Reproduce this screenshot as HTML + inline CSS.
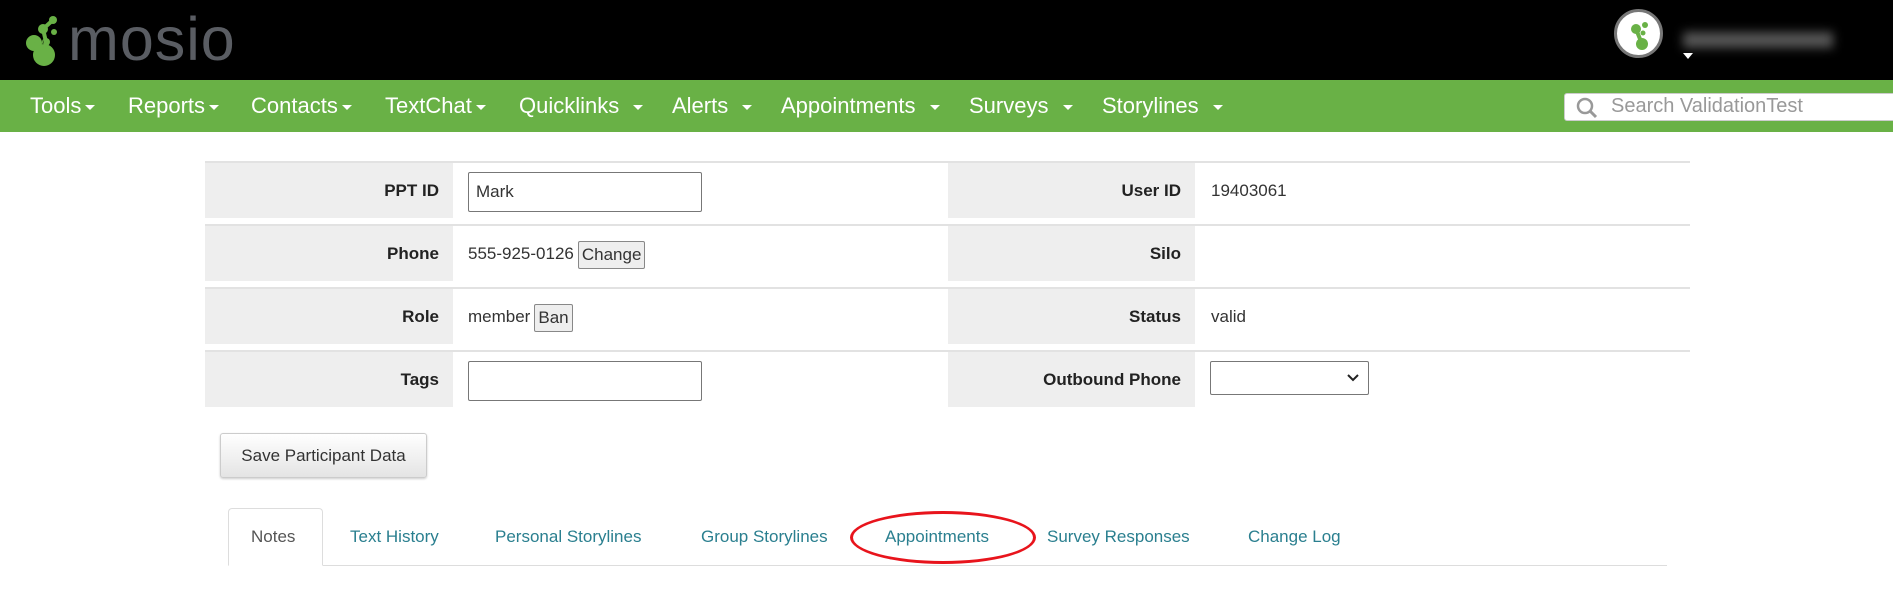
<!DOCTYPE html>
<html><head><meta charset="utf-8"><style>
*{box-sizing:border-box}
body{margin:0;width:1893px;height:591px;overflow:hidden;background:#fff;font-family:"Liberation Sans",Arial,sans-serif;position:relative}
.abs{position:absolute}
.top{left:0;top:0;width:1893px;height:80px;background:#000}
.nav{left:0;top:80px;width:1893px;height:52px;background:#69b146}
.nav span{position:absolute;top:13px;color:#fff;font-size:22px;white-space:nowrap}
.car{display:inline-block;width:0;height:0;border-left:5px solid transparent;border-right:5px solid transparent;border-top:5px solid #fff;vertical-align:middle;margin-left:4px}
.row{position:absolute;left:205px;width:1485px;height:57px;border-top:2px solid #e2e2e2}
.lab{position:absolute;top:0;height:55px;background:#eee;font-weight:bold;font-size:17px;color:#222;text-align:right;line-height:55px;padding-right:14px}
.val{position:absolute;top:0;height:55px;font-size:17px;color:#333;line-height:55px}
.inp{position:absolute;border:1px solid #777;border-radius:2px;background:#fff}
.btn{display:inline-block;border:1px solid #888;background:#eee;padding:0 3px;line-height:26px;border-radius:2px;margin-left:4px;vertical-align:middle}
.tab{position:absolute;top:527px;font-size:17px;color:#2a7f8f}
</style></head><body>
<div class="abs top"></div>
<svg class="abs" style="left:24px;top:12px" width="50" height="58" viewBox="0 0 50 58">
<circle cx="10" cy="31" r="8" fill="#69b146"/><circle cx="20" cy="43" r="11" fill="#69b146"/><circle cx="19" cy="17" r="5" fill="#69b146"/><circle cx="29" cy="8" r="4" fill="#69b146"/><circle cx="30" cy="20" r="3" fill="#69b146"/><circle cx="22" cy="30" r="4" fill="#69b146"/>
<path d="M10 31 L20 43 M19 17 L22 30 L20 43 M19 17 L29 8" stroke="#69b146" stroke-width="4"/></svg>
<div class="abs" style="left:68px;top:4px;font-size:61px;color:#5a5d63;letter-spacing:1px">mosio</div>
<div class="abs" style="left:1614px;top:9px;width:49px;height:49px;border-radius:50%;background:#fff;border:3px solid #777"></div>
<svg class="abs" style="left:1620px;top:15px" width="38" height="38"><circle cx="16" cy="14" r="5" fill="#69b146"/><circle cx="25" cy="10" r="3" fill="#69b146"/><circle cx="23" cy="18" r="2.5" fill="#69b146"/><circle cx="22" cy="29" r="6" fill="#69b146"/><path d="M16 14 L22 29" stroke="#69b146" stroke-width="4"/></svg>
<div class="abs" style="left:1683px;top:32px;width:150px;height:16px;background:#555;filter:blur(5px)"></div>
<div class="abs" style="left:1683px;top:53px;width:0;height:0;border-left:5px solid transparent;border-right:5px solid transparent;border-top:6px solid #fff"></div>
<div class="abs nav">
<span style="left:30px">Tools<i class="car"></i></span>
<span style="left:128px">Reports<i class="car"></i></span>
<span style="left:251px">Contacts<i class="car"></i></span>
<span style="left:385px">TextChat<i class="car"></i></span>
<span style="left:519px">Quicklinks <i class="car" style="margin-left:8px"></i></span>
<span style="left:672px">Alerts <i class="car" style="margin-left:8px"></i></span>
<span style="left:781px">Appointments <i class="car" style="margin-left:8px"></i></span>
<span style="left:969px">Surveys <i class="car" style="margin-left:8px"></i></span>
<span style="left:1102px">Storylines <i class="car" style="margin-left:8px"></i></span>
</div>
<div class="abs" style="left:1564px;top:93px;width:340px;height:28px;background:#fff;border:1px solid #ccc;border-radius:3px"></div>
<svg class="abs" style="left:1576px;top:97px" width="24" height="22"><circle cx="9" cy="9" r="7" fill="none" stroke="#999" stroke-width="2.5"/><path d="M14 14 L20 20" stroke="#999" stroke-width="3"/></svg>
<div class="abs" style="left:1611px;top:95px;font-size:20px;color:#999">Search ValidationTest</div>

<div class="row" style="top:161px"><div class="lab" style="left:0;width:248px">PPT ID</div><div class="lab" style="left:743px;width:247px">User ID</div><div class="val" style="left:1006px">19403061</div></div>
<div class="row" style="top:224px"><div class="lab" style="left:0;width:248px">Phone</div><div class="val" style="left:263px">555-925-0126<span class="btn">Change</span></div><div class="lab" style="left:743px;width:247px">Silo</div></div>
<div class="row" style="top:287px"><div class="lab" style="left:0;width:248px">Role</div><div class="val" style="left:263px">member<span class="btn">Ban</span></div><div class="lab" style="left:743px;width:247px">Status</div><div class="val" style="left:1006px">valid</div></div>
<div class="row" style="top:350px"><div class="lab" style="left:0;width:248px">Tags</div><div class="lab" style="left:743px;width:247px">Outbound Phone</div></div>
<div class="inp" style="left:468px;top:172px;width:234px;height:40px;font-size:17px;color:#333;padding:9px 7px">Mark</div>
<div class="inp" style="left:468px;top:361px;width:234px;height:40px"></div>
<div class="inp" style="left:1210px;top:361px;width:159px;height:34px"></div>
<svg class="abs" style="left:1346px;top:373px" width="14" height="10"><path d="M2 2 L7 7 L12 2" fill="none" stroke="#222" stroke-width="2"/></svg>
<div class="abs" style="left:220px;top:433px;width:207px;height:45px;border:1px solid #ccc;border-radius:3px;background:linear-gradient(#fff,#e4e4e4);box-shadow:0 1px 2px rgba(0,0,0,.2);font-size:17px;color:#333;text-align:center;line-height:43px">Save Participant Data</div>
<div class="abs" style="left:228px;top:565px;width:1439px;height:1px;background:#ddd"></div>
<div class="abs" style="left:228px;top:508px;width:95px;height:58px;border:1px solid #ddd;border-bottom:1px solid #fff;border-radius:4px 4px 0 0;background:#fff"></div>
<div class="tab" style="left:251px;color:#555">Notes</div>
<div class="tab" style="left:350px">Text History</div>
<div class="tab" style="left:495px">Personal Storylines</div>
<div class="tab" style="left:701px">Group Storylines</div>
<div class="tab" style="left:885px">Appointments</div>
<div class="tab" style="left:1047px">Survey Responses</div>
<div class="tab" style="left:1248px">Change Log</div>
<div class="abs" style="left:850px;top:511px;width:186px;height:53px;border:3px solid #e8141c;border-radius:50%"></div>
</body></html>
